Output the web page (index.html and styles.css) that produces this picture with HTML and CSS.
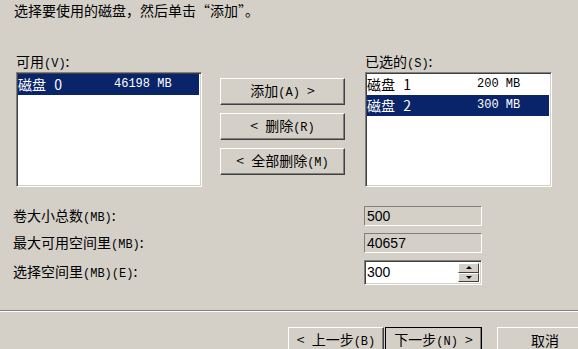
FILE: index.html
```html
<!DOCTYPE html>
<html lang="zh-CN">
  <head>
    <meta charset="UTF-8" />
    <title>选择磁盘</title>
    <link rel="stylesheet" href="styles.css">
  </head>
  <body>
    <div class="dialog">
      <p class="intro">选择要使用的磁盘，然后单击“添加”。</p>

      <div class="picker">
        <div class="col">
          <div class="label">可用<span class="key">(V)</span>:</div>
          <div class="list list-left">
            <div class="row sel"><span class="name">磁盘 0</span><span class="size">46198 MB</span></div>
          </div>
        </div>

        <div class="actions">
          <button class="btn">添加<span class="key">(A)</span> &gt;</button>
          <button class="btn">&lt; 删除<span class="key">(R)</span></button>
          <button class="btn">&lt; 全部删除<span class="key">(M)</span></button>
        </div>

        <div class="col">
          <div class="label">已选的<span class="key">(S)</span>:</div>
          <div class="list list-right">
            <div class="row"><span class="name">磁盘 1</span><span class="size">200 MB</span></div>
            <div class="row sel"><span class="name">磁盘 2</span><span class="size">300 MB</span></div>
          </div>
        </div>
      </div>

      <div class="fields">
        <div class="flabel">卷大小总数<span class="key">(MB)</span>:</div>
        <div class="field ro">500</div>
        <div class="flabel">最大可用空间里<span class="key">(MB)</span>:</div>
        <div class="field ro">40657</div>
        <div class="flabel">选择空间里<span class="key">(MB)(E)</span>:</div>
        <div class="spin">
          <div class="spin-text">300</div>
          <div class="spin-btns">
            <span class="arrow up"></span>
            <span class="arrow down"></span>
          </div>
        </div>
      </div>
    </div>

    <div class="footer">
      <button class="btn nav">&lt; 上一步<span class="key">(B)</span></button>
      <button class="btn nav default">下一步<span class="key">(N)</span> &gt;</button>
      <button class="btn nav cancel">取消</button>
    </div>
  </body>
</html>
```

FILE: styles.css
```css
html,
body {
  margin: 0;
  height: 100%;
  overflow: hidden;
}
body {
  background: #d4d0c8;
  color: #000;
  font-family: "Noto Sans CJK SC", "Liberation Sans", sans-serif;
  font-size: 14px;
}
.dialog {
  height: 310px;
  border-bottom: 1px solid #808080;
  box-shadow: 0 1px 0 #fff;
}
.intro {
  margin: 0;
  padding: 0 0 0 14px;
  line-height: 20px;
}
.key {
  font-family: "Liberation Mono", monospace;
  font-size: 12px;
}
.picker {
  display: flex;
  align-items: flex-start;
  margin-top: 31px;
  padding-left: 16px;
}
.label {
  line-height: 21px;
  height: 21px;
}
.list {
  background: #fff;
  border: 1px solid;
  border-color: #808080 #fff #fff #808080;
  box-shadow: inset 1px 1px #404040, inset -1px -1px #d4d0c8;
  padding: 1px 2px 2px 1px;
  box-sizing: border-box;
  height: 115px;
}
.list-left {
  width: 186px;
}
.list-right {
  width: 187px;
}
.row {
  display: flex;
  height: 21px;
  line-height: 21px;
  font-size: 14px;
  word-spacing: 5px;
}
.row .size {
  font-family: "Liberation Mono", monospace;
  font-size: 12px;
  word-spacing: 0;
}
.list-left .name {
  width: 96px;
}
.list-right .name {
  width: 110px;
}
.row.sel {
  background: #0a246a;
  color: #fff;
}
.actions {
  display: flex;
  flex-direction: column;
  gap: 8px;
  margin: 27px 20px 0 18px;
}
.btn {
  font-family: "Noto Sans CJK SC", "Liberation Sans", sans-serif;
  font-size: 14px;
  color: #000;
  background: #d4d0c8;
  border: 1px solid;
  border-color: #fff #404040 #404040 #fff;
  box-shadow: inset -1px -1px #808080, inset 1px 1px #d4d0c8;
  padding: 0;
  margin: 0;
  line-height: 20px;
  word-spacing: 4px;
}
.actions .btn {
  width: 125px;
  height: 27px;
}
.fields {
  display: grid;
  grid-template-columns: 351px 118px;
  grid-template-rows: 20px 20px 25px;
  row-gap: 7px;
  margin-top: 19px;
  padding-left: 13px;
  align-items: center;
}
.flabel {
  line-height: 20px;
}
.field {
  height: 20px;
  box-sizing: border-box;
  border: 1px solid;
  border-color: #808080 #fff #fff #808080;
  padding-left: 2px;
  font-family: "Liberation Sans", sans-serif;
  font-size: 14px;
  line-height: 18px;
}
.field.ro {
  background: #d4d0c8;
}
.spin {
  display: flex;
  height: 25px;
  box-sizing: border-box;
  border: 1px solid;
  border-color: #808080 #fff #fff #808080;
  box-shadow: inset 1px 1px #404040, inset -1px -1px #d4d0c8;
  background: #fff;
  padding: 2px;
}
.spin-text {
  flex: 1;
  font-family: "Liberation Sans", sans-serif;
  font-size: 14px;
  line-height: 19px;
}
.spin-btns {
  display: flex;
  flex-direction: column;
  width: 21px;
}
.arrow {
  flex: 1;
  display: flex;
  align-items: center;
  justify-content: center;
  background: #d4d0c8;
  border: 1px solid;
  border-color: #fff #404040 #404040 #fff;
}
.arrow::after {
  content: "";
  border-left: 3px solid transparent;
  border-right: 3px solid transparent;
}
.arrow.up::after {
  border-bottom: 3px solid #000;
}
.arrow.down::after {
  border-top: 3px solid #000;
}
.footer {
  display: flex;
  padding: 16px 0 0 288px;
}
.nav {
  width: 96px;
  height: 26px;
  flex: none;
}
.nav.default {
  width: 97px;
  margin-left: 1px;
  outline: 1px solid #000;
  outline-offset: -1px;
}
.nav.cancel {
  margin-left: 15px;
}
```
